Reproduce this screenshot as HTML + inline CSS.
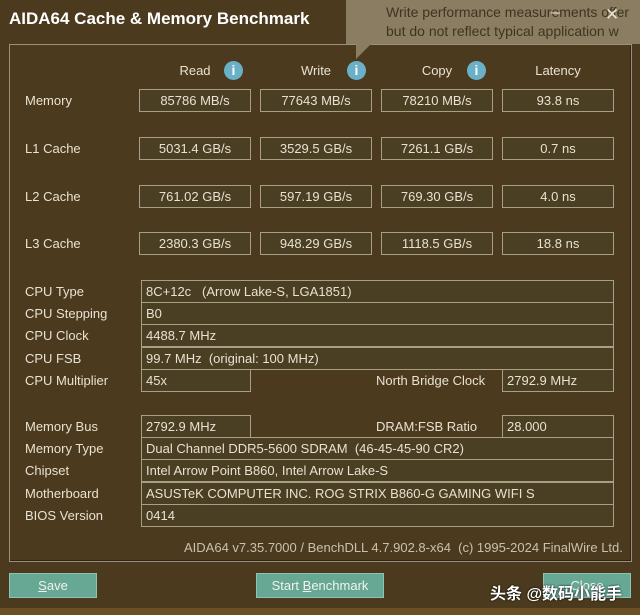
<!DOCTYPE html>
<html><head><meta charset="utf-8"><style>
*{margin:0;padding:0;box-sizing:border-box}
body{width:640px;height:615px;background:#4b3a1e;font-family:"Liberation Sans","Noto Sans CJK SC",sans-serif;font-size:13px;color:#e8e2d2;position:relative;overflow:hidden}
.a{position:absolute;white-space:nowrap}
.panel{position:absolute;left:9px;top:44px;width:623px;height:518px;border:1px solid #9c907a;box-shadow:inset -1px -1px 0 #2e2412}
.b{position:absolute;height:23px;border:1px solid #a99e86;background:#4a3e23;line-height:21px}
.c{text-align:center}
.l{padding-left:4px}
.h{position:absolute;top:63px;text-align:center}
.i{position:absolute;top:61px;width:19px;height:19px;border-radius:50%;background:#6ab0c8;color:#fff;font-weight:bold;text-align:center;line-height:19px;font-size:14px}
.btn{position:absolute;top:573px;height:25px;background:#66a894;border:1px solid #8fc4b2;text-align:center;line-height:23px;color:#f2f2ec}
</style></head><body>
<div class="a" style="left:9px;top:9px;font-size:17px;font-weight:bold;color:#fff">AIDA64 Cache &amp; Memory Benchmark</div>
<div class="panel"></div>
<div class="a" style="left:346px;top:0;width:294px;height:44px;background:#8b7d62"></div>
<div class="a" style="left:356px;top:44px;width:0;height:0;border-left:15px solid #8b7d62;border-bottom:15px solid transparent"></div>
<div class="a" style="left:386px;top:3px;font-size:14px;color:#3f341f;line-height:19px">Write performance measurements offer<br>but do not reflect typical application w</div>
<div class="a" style="left:551px;top:4px;color:#e8e2d2;font-size:16px">–</div>
<div class="a" style="left:605px;top:5px;color:#e8e2d2;font-size:17px">✕</div>

<div class="h" style="left:160px;width:70px">Read</div><div class="i" style="left:224px">i</div>
<div class="h" style="left:281px;width:70px">Write</div><div class="i" style="left:347px">i</div>
<div class="h" style="left:402px;width:70px">Copy</div><div class="i" style="left:467px">i</div>
<div class="h" style="left:502px;width:112px">Latency</div>

<div class="a" style="left:25px;top:93px">Memory</div>
<div class="b c" style="left:139px;top:89px;width:112px">85786 MB/s</div>
<div class="b c" style="left:260px;top:89px;width:112px">77643 MB/s</div>
<div class="b c" style="left:381px;top:89px;width:112px">78210 MB/s</div>
<div class="b c" style="left:502px;top:89px;width:112px">93.8 ns</div>

<div class="a" style="left:25px;top:141px">L1 Cache</div>
<div class="b c" style="left:139px;top:137px;width:112px">5031.4 GB/s</div>
<div class="b c" style="left:260px;top:137px;width:112px">3529.5 GB/s</div>
<div class="b c" style="left:381px;top:137px;width:112px">7261.1 GB/s</div>
<div class="b c" style="left:502px;top:137px;width:112px">0.7 ns</div>

<div class="a" style="left:25px;top:189px">L2 Cache</div>
<div class="b c" style="left:139px;top:185px;width:112px">761.02 GB/s</div>
<div class="b c" style="left:260px;top:185px;width:112px">597.19 GB/s</div>
<div class="b c" style="left:381px;top:185px;width:112px">769.30 GB/s</div>
<div class="b c" style="left:502px;top:185px;width:112px">4.0 ns</div>

<div class="a" style="left:25px;top:236px">L3 Cache</div>
<div class="b c" style="left:139px;top:232px;width:112px">2380.3 GB/s</div>
<div class="b c" style="left:260px;top:232px;width:112px">948.29 GB/s</div>
<div class="b c" style="left:381px;top:232px;width:112px">1118.5 GB/s</div>
<div class="b c" style="left:502px;top:232px;width:112px">18.8 ns</div>

<div class="a" style="left:25px;top:284px">CPU Type</div><div class="b l" style="left:141px;top:280px;width:473px">8C+12c &nbsp; (Arrow Lake-S, LGA1851)</div>
<div class="a" style="left:25px;top:306px">CPU Stepping</div><div class="b l" style="left:141px;top:302px;width:473px">B0</div>
<div class="a" style="left:25px;top:328px">CPU Clock</div><div class="b l" style="left:141px;top:324px;width:473px">4488.7 MHz</div>
<div class="a" style="left:25px;top:351px">CPU FSB</div><div class="b l" style="left:141px;top:347px;width:473px">99.7 MHz &nbsp;(original: 100 MHz)</div>
<div class="a" style="left:25px;top:373px">CPU Multiplier</div><div class="b l" style="left:141px;top:369px;width:110px">45x</div>
<div class="a" style="left:376px;top:373px">North Bridge Clock</div><div class="b l" style="left:502px;top:369px;width:112px">2792.9 MHz</div>

<div class="a" style="left:25px;top:419px">Memory Bus</div><div class="b l" style="left:141px;top:415px;width:110px">2792.9 MHz</div>
<div class="a" style="left:376px;top:419px">DRAM:FSB Ratio</div><div class="b l" style="left:502px;top:415px;width:112px">28.000</div>
<div class="a" style="left:25px;top:441px">Memory Type</div><div class="b l" style="left:141px;top:437px;width:473px">Dual Channel DDR5-5600 SDRAM &nbsp;(46-45-45-90 CR2)</div>
<div class="a" style="left:25px;top:463px">Chipset</div><div class="b l" style="left:141px;top:459px;width:473px">Intel Arrow Point B860, Intel Arrow Lake-S</div>
<div class="a" style="left:25px;top:486px">Motherboard</div><div class="b l" style="left:141px;top:482px;width:473px">ASUSTeK COMPUTER INC. ROG STRIX B860-G GAMING WIFI S</div>
<div class="a" style="left:25px;top:508px">BIOS Version</div><div class="b l" style="left:141px;top:504px;width:473px">0414</div>

<div class="a" style="left:184px;top:540px;color:#c9c1ae">AIDA64 v7.35.7000 / BenchDLL 4.7.902.8-x64 &nbsp;(c) 1995-2024 FinalWire Ltd.</div>

<div class="btn" style="left:9px;width:88px"><u>S</u>ave</div>
<div class="btn" style="left:256px;width:128px">Start <u>B</u>enchmark</div>
<div class="btn" style="left:543px;width:88px">Close</div>
<div class="a" style="left:490px;top:580px;font-size:16px;font-weight:bold;color:#fff;text-shadow:0 0 2px #000">头条 @数码小能手</div>
<div class="a" style="left:0;top:608px;width:640px;height:7px;background:#6b5125"></div>
</body></html>
